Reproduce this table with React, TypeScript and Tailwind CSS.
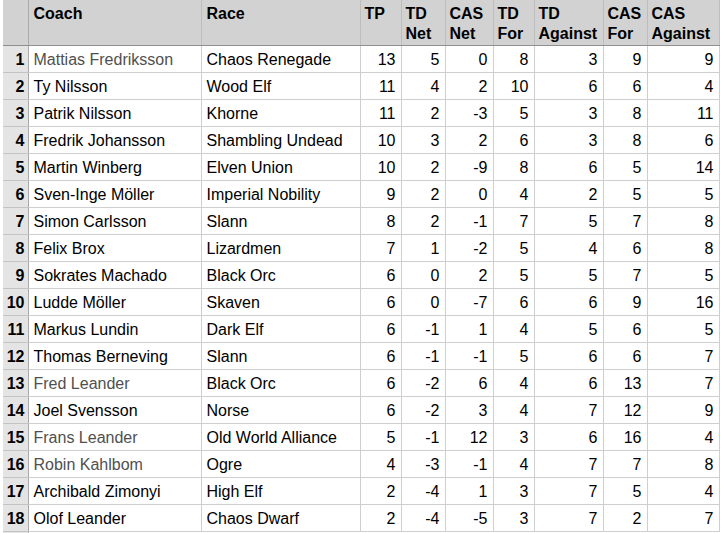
const rows: [string, string, number, number, number, number, number, number, number, boolean?][] = [
  ["Mattias Fredriksson", "Chaos Renegade", 13, 5, 0, 8, 3, 9, 9, true],
  ["Ty Nilsson", "Wood Elf", 11, 4, 2, 10, 6, 6, 4],
  ["Patrik Nilsson", "Khorne", 11, 2, -3, 5, 3, 8, 11],
  ["Fredrik Johansson", "Shambling Undead", 10, 3, 2, 6, 3, 8, 6],
  ["Martin Winberg", "Elven Union", 10, 2, -9, 8, 6, 5, 14],
  ["Sven-Inge Möller", "Imperial Nobility", 9, 2, 0, 4, 2, 5, 5],
  ["Simon Carlsson", "Slann", 8, 2, -1, 7, 5, 7, 8],
  ["Felix Brox", "Lizardmen", 7, 1, -2, 5, 4, 6, 8],
  ["Sokrates Machado", "Black Orc", 6, 0, 2, 5, 5, 7, 5],
  ["Ludde Möller", "Skaven", 6, 0, -7, 6, 6, 9, 16],
  ["Markus Lundin", "Dark Elf", 6, -1, 1, 4, 5, 6, 5],
  ["Thomas Berneving", "Slann", 6, -1, -1, 5, 6, 6, 7],
  ["Fred Leander", "Black Orc", 6, -2, 6, 4, 6, 13, 7, true],
  ["Joel Svensson", "Norse", 6, -2, 3, 4, 7, 12, 9],
  ["Frans Leander", "Old World Alliance", 5, -1, 12, 3, 6, 16, 4, true],
  ["Robin Kahlbom", "Ogre", 4, -3, -1, 4, 7, 7, 8, true],
  ["Archibald Zimonyi", "High Elf", 2, -4, 1, 3, 7, 5, 4],
  ["Olof Leander", "Chaos Dwarf", 2, -4, -5, 3, 7, 2, 7],
];

const headers: { label: string[]; w: string }[] = [
  { label: ["TP"], w: "w-[41px]" },
  { label: ["TD", "Net"], w: "w-[44px]" },
  { label: ["CAS", "Net"], w: "w-[48px]" },
  { label: ["TD", "For"], w: "w-[41px]" },
  { label: ["TD", "Against"], w: "w-[69px]" },
  { label: ["CAS", "For"], w: "w-[44px]" },
  { label: ["CAS", "Against"], w: "w-[72px]" },
];

export default function App() {
  return (
    <div className="h-[533px] w-[728px] overflow-hidden bg-white pl-[3px] font-['Liberation_Sans',Arial,sans-serif] text-[16px] leading-[20px] text-black">
      <table className="w-[716px] table-fixed border-collapse">
        <colgroup>
          <col className="w-[25px]" />
          <col className="w-[173px]" />
          <col className="w-[159px]" />
          {headers.map((h) => (
            <col key={h.label.join(" ")} className={h.w} />
          ))}
        </colgroup>
        <thead>
          <tr className="h-[45px] bg-[#d2d2d2]">
            <th className="border-r border-b border-r-[#a9a9a9] border-b-[#8f8f8f] bg-[#d2d2d2]" />
            <th className="border-r border-b border-r-[#bdbdbd] border-b-[#8f8f8f] px-[5px] pt-[4px] text-left align-top font-bold">Coach</th>
            <th className="border-r border-b border-r-[#bdbdbd] border-b-[#8f8f8f] px-[5px] pt-[4px] text-left align-top font-bold">Race</th>
            {headers.map((h) => (
              <th
                key={h.label.join(" ")}
                className="border-r border-b border-r-[#bdbdbd] border-b-[#8f8f8f] px-[4px] pt-[4px] text-left align-top font-bold whitespace-nowrap"
              >
                {h.label.map((l) => (
                  <div key={l}>{l}</div>
                ))}
              </th>
            ))}
          </tr>
        </thead>
        <tbody>
          {rows.map((r, i) => {
            const nums = r.slice(2, 9) as number[];
            return (
              <tr key={r[0]} className="h-[27px]">
                <td className="border-r border-b border-r-[#a9a9a9] border-b-[#c4c4c4] bg-[#e4e4e4] pt-[2px] pr-[3px] text-right font-bold">
                  {i + 1}
                </td>
                <td className={`border-r border-b border-[#cfcfcf] px-[5px] pt-[2px] whitespace-nowrap ${r[9] ? "text-[#505050]" : ""}`}>
                  {r[0]}
                </td>
                <td className="border-r border-b border-[#cfcfcf] px-[5px] pt-[2px] whitespace-nowrap">{r[1]}</td>
                {nums.map((n, j) => (
                  <td key={j} className="border-r border-b border-[#cfcfcf] px-[5px] pt-[2px] text-right">
                    {n}
                  </td>
                ))}
              </tr>
            );
          })}
          <tr className="h-[27px]">
            <td className="border-r border-r-[#a9a9a9] bg-[#e4e4e4]" />
            <td colSpan={9} />
          </tr>
        </tbody>
      </table>
    </div>
  );
}
